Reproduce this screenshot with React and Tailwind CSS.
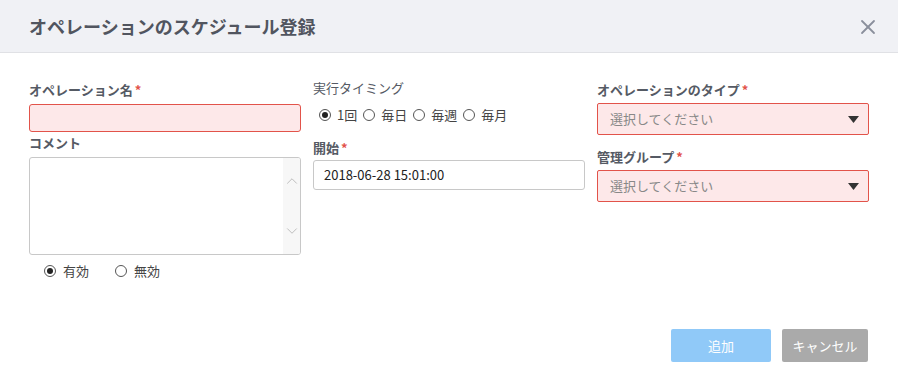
import { X, ChevronUp, ChevronDown } from 'lucide-react';

function Label({ text, required, bold = true }) {
  return (
    <div className={`h-[20px] leading-[20px] text-[13px] text-[#555a64] ${bold ? 'font-bold' : ''}`}>
      {text}
      {required && <span className="ml-[2px] text-[#e2534a]">*</span>}
    </div>
  );
}

function Radio({ label, checked, tight }) {
  return (
    <label className={`flex items-center text-[13px] text-[#444] ${tight ? 'gap-[6px]' : 'gap-[7px]'}`}>
      <span className="flex h-[12px] w-[12px] items-center justify-center rounded-full border border-[#555] bg-white">
        {checked && <span className="h-[6px] w-[6px] rounded-full bg-[#222]" />}
      </span>
      {label}
    </label>
  );
}

function Select() {
  return (
    <div className="flex h-[32px] items-center justify-between rounded-[2px] border border-[#e2534a] bg-[#fde8e9] pl-[12px] pr-[9px] text-[13px] text-[#888]">
      <span>選択してください</span>
      <svg width="11" height="7" viewBox="0 0 11 7">
        <path d="M0 0 H11 L5.5 7 Z" fill="#333" />
      </svg>
    </div>
  );
}

export default function App() {
  return (
    <div className="h-[387px] w-[898px] bg-white" style={{ fontFamily: '"Noto Sans CJK JP", "Noto Sans", sans-serif' }}>
      {/* header */}
      <div className="flex h-[53px] items-center justify-between border-b border-[#e0e1e5] bg-[#f0f1f5] pl-[29px] pr-[18px]">
        <h1 className="text-[18px] font-bold text-[#51555f]">オペレーションのスケジュール登録</h1>
        <X size={24} strokeWidth={1.8} className="mt-[2px] text-[#8a8f9c]" />
      </div>

      <div className="px-[29px] pt-[27px]">
        <div className="grid grid-cols-3 gap-x-[12px]">
          {/* column 1 */}
          <div className="flex flex-col">
            <Label text="オペレーション名" required />
            <div className="mt-[4px] h-[28px] rounded-[3px] border border-[#e2534a] bg-[#fde8e9]" />
            <div className="mt-[1px]">
              <Label text="コメント" />
            </div>
            <div className="mt-[4px] flex h-[98px] overflow-hidden rounded-[3px] border border-[#c8c8c8] bg-white">
              <div className="flex-1" />
              <div className="flex w-[17px] flex-col items-center justify-between bg-[#f7f7f7] py-[14px]">
                <ChevronUp size={18} strokeWidth={1.2} className="text-[#b8b8b8]" />
                <ChevronDown size={18} strokeWidth={1.2} className="text-[#b8b8b8]" />
              </div>
            </div>
            <div className="mt-[6px] flex h-[20px] items-center gap-[26px] pl-[15px]">
              <Radio label="有効" checked />
              <Radio label="無効" />
            </div>
          </div>

          {/* column 2 */}
          <div className="flex flex-col">
            <div className="-mt-[2px]">
              <Label text="実行タイミング" bold={false} />
            </div>
            <div className="mt-[7px] flex h-[20px] items-center gap-[6px] pl-[6px]">
              <Radio label="1回" checked tight />
              <Radio label="毎日" tight />
              <Radio label="毎週" tight />
              <Radio label="毎月" tight />
            </div>
            <div className="mt-[13px]">
              <Label text="開始" required />
            </div>
            <div className="mt-[2px] flex h-[30px] items-center rounded-[3px] border border-[#c8c8c8] bg-white pl-[10px] text-[13px] text-[#222]">
              2018-06-28 15:01:00
            </div>
          </div>

          {/* column 3 */}
          <div className="flex flex-col">
            <Label text="オペレーションのタイプ" required />
            <div className="mt-[3px]">
              <Select />
            </div>
            <div className="mt-[12px]">
              <Label text="管理グループ" required />
            </div>
            <div className="mt-[3px]">
              <Select />
            </div>
          </div>
        </div>

        <div className="mt-[48px] flex justify-end gap-[11px] pr-[1px]">
          <button className="h-[33px] w-[100px] rounded-[2px] bg-[#90c9f8] text-[13px] text-white">追加</button>
          <button className="h-[33px] w-[86px] rounded-[2px] bg-[#aaaaaa] text-[13px] text-white">キャンセル</button>
        </div>
      </div>
    </div>
  );
}
